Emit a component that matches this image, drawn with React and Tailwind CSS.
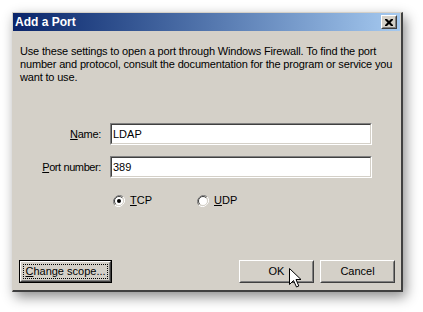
const font = { fontFamily: '"Liberation Sans", Arial, sans-serif' };

function Sunken({ value }) {
	return (
		<div className="w-[262px] h-[22px] border border-t-[#808080] border-l-[#808080] border-r-white border-b-white">
			<div className="h-full bg-white border border-t-[#404040] border-l-[#404040] border-r-[#d4d0c8] border-b-[#d4d0c8] pl-[1px] flex items-center text-[11px] text-black">
				{value}
			</div>
		</div>
	);
}

function Radio({ checked }) {
	return (
		<svg width="12" height="12" viewBox="0 0 12 12">
			<path d="M10.2 1.8 A6 6 0 0 0 1.8 10.2" fill="none" stroke="#808080" strokeWidth="1" />
			<path d="M1.8 10.2 A6 6 0 0 0 10.2 1.8" fill="none" stroke="#ffffff" strokeWidth="1" />
			<circle cx="6" cy="6" r="4.5" fill="#ffffff" />
			<path d="M9.2 2.8 A4.5 4.5 0 0 0 2.8 9.2" fill="none" stroke="#404040" strokeWidth="1" />
			<path d="M2.8 9.2 A4.5 4.5 0 0 0 9.2 2.8" fill="none" stroke="#d4d0c8" strokeWidth="1" />
			{checked && <circle cx="6" cy="6" r="2" fill="#000000" />}
		</svg>
	);
}

function Button({ children, width, focused }) {
	if (focused) {
		return (
			<div className={`${width} h-[23px] border border-black`}>
				<div className="h-full border border-t-white border-l-white border-r-[#404040] border-b-[#404040]">
					<div className="h-full border border-t-[#d4d0c8] border-l-[#d4d0c8] border-r-[#808080] border-b-[#808080] p-[1px]">
						<div className="h-full border border-dotted border-black flex items-center justify-center text-[11px] text-black">
							{children}
						</div>
					</div>
				</div>
			</div>
		);
	}
	return (
		<div className={`${width} h-[23px]`}>
			<div className="h-full border border-t-white border-l-white border-r-[#404040] border-b-[#404040]">
				<div className="h-full border border-t-[#d4d0c8] border-l-[#d4d0c8] border-r-[#808080] border-b-[#808080] flex items-center justify-center text-[11px] text-black">
					{children}
				</div>
			</div>
		</div>
	);
}

export default function App() {
	return (
		<div className="w-[423px] h-[312px] bg-white pt-[12px] pl-[12px]" style={font}>
			<div className="relative w-[391px] h-[280px] bg-[#d4d0c8] border-t border-l border-t-[#d4d0c8] border-l-[#d4d0c8] border-r-2 border-b-2 border-r-[#404040] border-b-[#404040] shadow-[3px_5px_12px_rgba(0,0,0,0.45)]">
				<div className="h-[18px] mr-[1px] bg-gradient-to-r from-[#0a246a] to-[#a6caf0] flex items-center justify-between pl-[2px] pr-[3px]">
					<span className="text-white font-bold text-[12px] leading-none">Add a Port</span>
					<div className="w-[16px] h-[14px] border border-t-white border-l-white border-r-[#404040] border-b-[#404040]">
						<div className="h-full bg-[#d4d0c8] border border-t-[#d4d0c8] border-l-[#d4d0c8] border-r-[#808080] border-b-[#808080] flex items-center justify-center">
							<svg width="8" height="7" viewBox="0 0 8 7">
								<path d="M0 0h2l2 2 2-2h2v1L5.5 3.5 8 6v1H6L4 5 2 7H0V6l2.5-2.5L0 1z" fill="#000" />
							</svg>
						</div>
					</div>
				</div>

				<div className="pl-[7px] pt-[14px] text-[11px] leading-[13px] text-black whitespace-nowrap">
					<p className="tracking-[-0.17px]">
						Use these settings to open a port through Windows Firewall. To find the port
						<br />
						number and protocol, consult the documentation for the program or service you
						<br />
						want to use.
					</p>

					<div className="flex items-center mt-[39px]">
						<span className="w-[81px] text-right tracking-[-0.3px]">
							<span className="underline">N</span>ame:
						</span>
						<div className="ml-[9px]">
							<Sunken value="LDAP" />
						</div>
					</div>

					<div className="flex items-center mt-[11px]">
						<span className="w-[81px] text-right tracking-[-0.4px]">
							<span className="underline">P</span>ort number:
						</span>
						<div className="ml-[9px]">
							<Sunken value="389" />
						</div>
					</div>

					<div className="flex items-center mt-[16px] pl-[93px] h-[13px]">
						<Radio checked />
						<span className="ml-[5px] w-[67px]">
							<span className="underline">T</span>CP
						</span>
						<Radio />
						<span className="ml-[5px]">
							<span className="underline">U</span>DP
						</span>
					</div>
				</div>

				<div className="flex items-center mt-[53px] pl-[6px] pr-[6px]">
					<Button width="w-[93px]" focused>
						<span>
							<span className="underline">C</span>hange scope...
						</span>
					</Button>
					<div className="ml-auto flex gap-[6px]">
						<Button width="w-[75px]">OK</Button>
						<Button width="w-[75px]">Cancel</Button>
					</div>
				</div>

				<svg className="absolute left-[276px] top-[255px]" width="13" height="20" viewBox="0 0 13 20">
					<path d="M0.5 0.5 V16.5 L4.5 12.5 L7.5 19 L9.8 18 L7 11.5 H12 Z" fill="#ffffff" stroke="#000000" strokeWidth="1" strokeLinejoin="miter" />
				</svg>
			</div>
		</div>
	);
}
